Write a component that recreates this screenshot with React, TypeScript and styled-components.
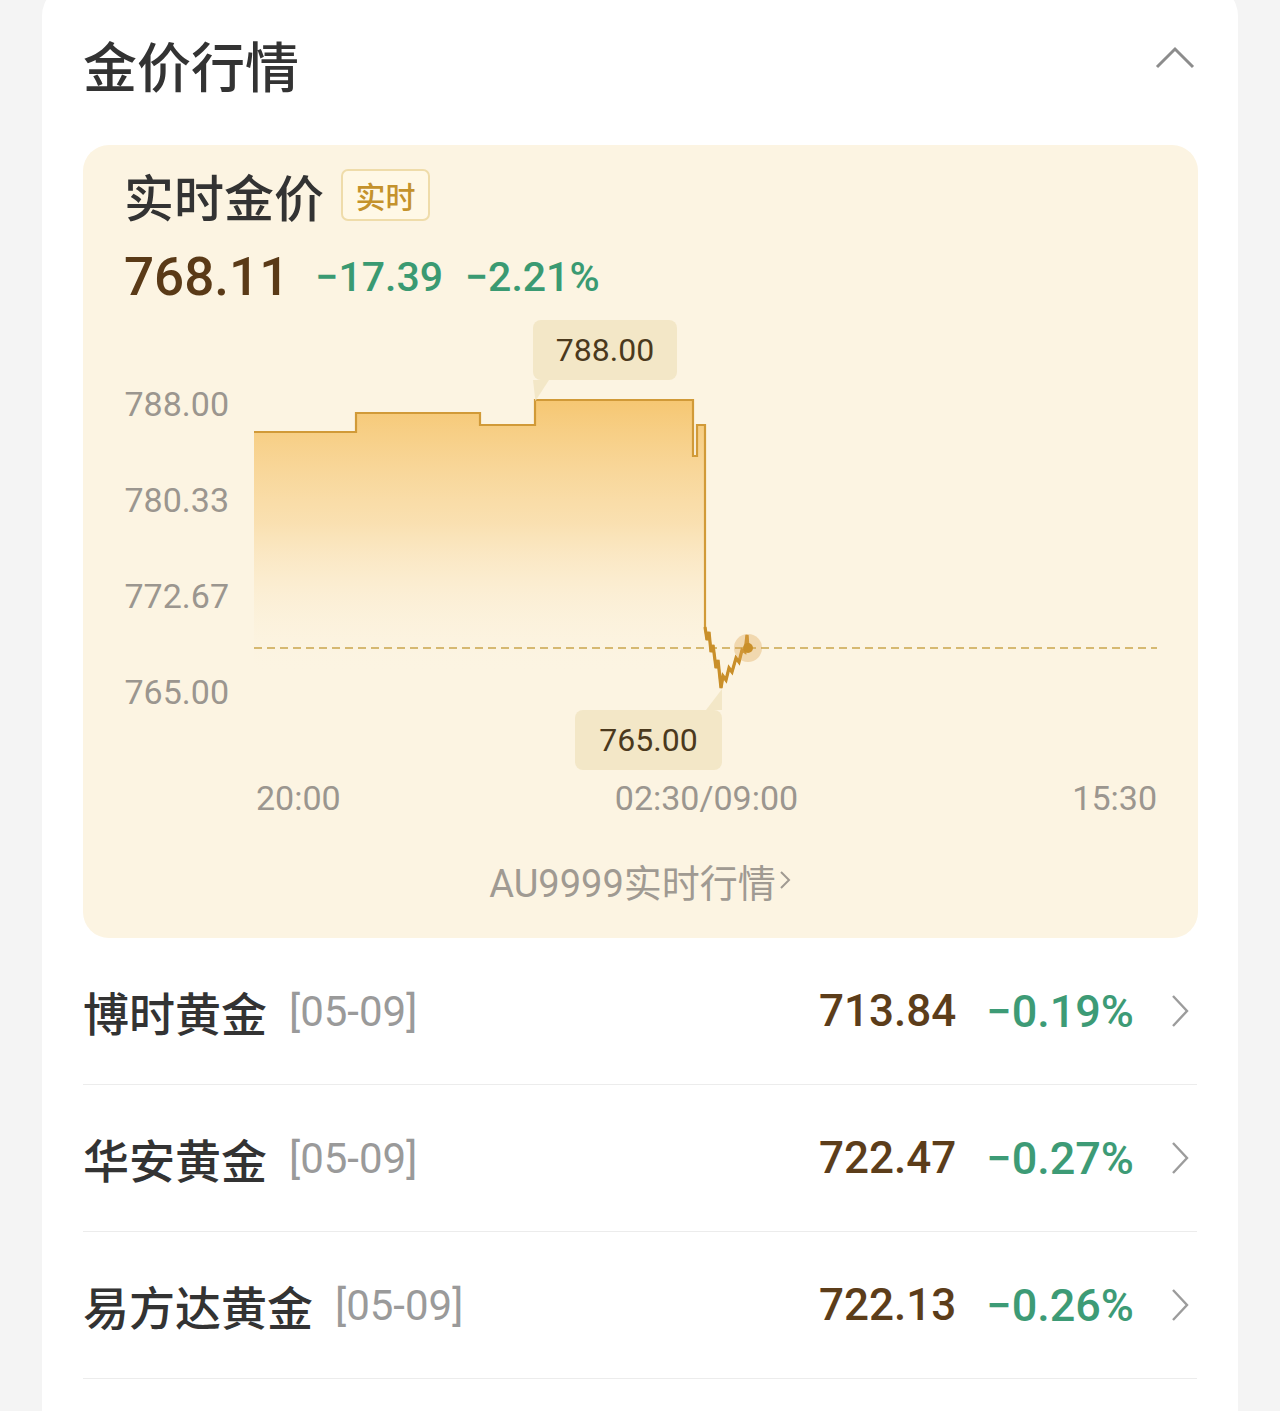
import styled, { createGlobalStyle } from "styled-components";

const GlobalStyle = createGlobalStyle`
  body {
    margin: 0;
    background: #f4f4f4;
    font-family: "Noto Sans CJK SC", "Noto Sans", sans-serif;
  }
`;

const NUM_FONT = `Roboto, "Noto Sans CJK SC", sans-serif`;

// chart geometry, in plot coordinates (origin at the plot's top-left)
const PLOT_W = 903;
const PLOT_H = 328;

const LINE: [number, number][] = [
  [0, 48], [102, 48], [102, 29], [226, 29], [226, 41], [281, 41], [281, 16],
  [439, 16], [439, 72], [443, 72], [443, 41], [451, 41], [451, 243],
  [453, 256], [455, 248], [457, 268], [459, 261], [462, 284], [464, 276],
  [467, 304], [469, 292], [472, 296], [475, 284], [478, 288], [482, 274],
  [485, 278], [488, 266], [491, 268], [493, 251], [494, 264],
];

const Y_LABELS = ["788.00", "780.33", "772.67", "765.00"];
const X_LABELS = ["20:00", "02:30/09:00", "15:30"];

const FUNDS = [
  { name: "博时黄金", date: "[05-09]", price: "713.84", change: "−0.19%" },
  { name: "华安黄金", date: "[05-09]", price: "722.47", change: "−0.27%" },
  { name: "易方达黄金", date: "[05-09]", price: "722.13", change: "−0.26%" },
];

export default function App() {
  const linePath = LINE.map(([x, y], i) => `${i ? "L" : "M"}${x},${y}`).join(" ");
  const wiggle = LINE.slice(12).map(([x, y], i) => `${i ? "L" : "M"}${x},${y}`).join(" ");
  const last = LINE[LINE.length - 1];
  const areaPath = `${linePath} L${last[0]},${PLOT_H} L0,${PLOT_H} Z`;

  return (
    <>
      <GlobalStyle />
      <Card>
        <Header>
          <Title>金价行情</Title>
          <CollapseIcon width="40" height="24" viewBox="0 0 40 24">
            <path d="M2 21 L20 3 L38 21" fill="none" stroke="#8c8c8c" strokeWidth="3" />
          </CollapseIcon>
        </Header>

        <GoldPanel>
          <PanelTitleRow>
            <PanelTitle>实时金价</PanelTitle>
            <LiveBadge>实时</LiveBadge>
          </PanelTitleRow>

          <PriceRow>
            <BigPrice>768.11</BigPrice>
            <Delta>−17.39</Delta>
            <Delta>−2.21%</Delta>
          </PriceRow>

          <ChartGrid>
            <YAxis>
              {Y_LABELS.map((l) => (
                <AxisLabel key={l}>{l}</AxisLabel>
              ))}
            </YAxis>
            <Plot>
              <svg width={PLOT_W} height={PLOT_H} style={{ overflow: "visible", display: "block" }}>
                <defs>
                  <linearGradient id="goldFill" x1="0" y1="16" x2="0" y2="290" gradientUnits="userSpaceOnUse">
                    <stop offset="0" stopColor="#f5c266" stopOpacity="0.9" />
                    <stop offset="0.45" stopColor="#f8d493" stopOpacity="0.62" />
                    <stop offset="1" stopColor="#fcf4e2" stopOpacity="0" />
                  </linearGradient>
                </defs>
                <path d={areaPath} fill="url(#goldFill)" />
                <line x1="0" y1="264" x2={PLOT_W} y2="264" stroke="#c9a54c" strokeWidth="1.6" strokeDasharray="8 5" />
                <path d={linePath} fill="none" stroke="#d19a38" strokeWidth="2.2" />
                <path d={wiggle} fill="none" stroke="#c98f2a" strokeWidth="3.2" />
                <circle cx="494" cy="264" r="14" fill="#dca24f" fillOpacity="0.35" />
                <circle cx="494" cy="264" r="5" fill="#c98f2a" />
              </svg>
              <Tip $x={279} $y={-64} $w={144} $tail="bottom">788.00</Tip>
              <Tip $x={321} $y={326} $w={147} $tail="top">765.00</Tip>
            </Plot>
          </ChartGrid>

          <XAxis>
            {X_LABELS.map((l) => (
              <AxisLabel key={l}>{l}</AxisLabel>
            ))}
          </XAxis>

          <MoreLink>
            AU9999实时行情
            <svg width="14" height="24" viewBox="0 0 14 24">
              <path d="M3 4 L11 12 L3 20" fill="none" stroke="#a09a92" strokeWidth="2" />
            </svg>
          </MoreLink>
        </GoldPanel>

        <FundList>
          {FUNDS.map((f) => (
            <FundRow key={f.name}>
              <FundName>{f.name}</FundName>
              <FundDate>{f.date}</FundDate>
              <FundRight>
                <FundPrice>{f.price}</FundPrice>
                <FundChange>{f.change}</FundChange>
                <svg width="20" height="34" viewBox="0 0 20 34">
                  <path d="M3 2 L17 17 L3 32" fill="none" stroke="#9c9c9c" strokeWidth="2.4" />
                </svg>
              </FundRight>
            </FundRow>
          ))}
        </FundList>
      </Card>
    </>
  );
}

// Styled Components

const Card = styled.div`
  width: 1196px;
  height: 1427px;
  margin: -16px 0 0 42px;
  padding: 16px 41px 0;
  box-sizing: border-box;
  background: #fff;
  border-radius: 32px 32px 0 0;
  overflow: hidden;
`;

const Header = styled.div`
  height: 130px;
  display: flex;
  align-items: center;
  justify-content: space-between;
  padding-right: 2px;
`;

const CollapseIcon = styled.svg`
  margin-bottom: 14px;
`;

const Title = styled.h1`
  margin: 0;
  font-size: 54px;
  font-weight: 500;
  color: #333;
  line-height: 1;
`;

const GoldPanel = styled.div`
  margin-top: 15px;
  margin-right: -1px;
  padding: 24px 41px 38px;
  background: #fcf4e2;
  border-radius: 26px;
`;

const PanelTitleRow = styled.div`
  display: flex;
  align-items: center;
  gap: 17px;
  height: 52px;
`;

const PanelTitle = styled.div`
  font-size: 50px;
  font-weight: 500;
  color: #333;
  line-height: 1;
`;

const LiveBadge = styled.span`
  display: inline-flex;
  align-items: center;
  justify-content: center;
  width: 89px;
  height: 52px;
  box-sizing: border-box;
  border: 2px solid #efdcaa;
  border-radius: 7px;
  background: #fff8e6;
  color: #c4922c;
  font-size: 30px;
  font-weight: 500;
`;

const PriceRow = styled.div`
  margin-top: 26px;
  height: 60px;
  display: flex;
  align-items: center;
  font-family: ${NUM_FONT};
`;

const BigPrice = styled.span`
  font-size: 53px;
  font-weight: 500;
  color: #5a3a17;
  margin-right: 26px;
`;

const Delta = styled.span`
  font-size: 41px;
  font-weight: 500;
  color: #3a9a72;
  margin-right: 22px;
`;

const ChartGrid = styled.div`
  margin-top: 77px;
  display: grid;
  grid-template-columns: 105px ${PLOT_W}px;
  column-gap: 25px;
  height: ${PLOT_H}px;
`;

const YAxis = styled.div`
  display: flex;
  flex-direction: column;
  justify-content: space-between;
  align-items: flex-end;
`;

const AxisLabel = styled.span`
  font-family: ${NUM_FONT};
  font-size: 34px;
  line-height: 40px;
  color: #9b968f;
`;

const Plot = styled.div`
  position: relative;
`;

const Tip = styled.div<{ $x: number; $y: number; $w: number; $tail: "top" | "bottom" }>`
  position: absolute;
  left: ${({ $x }) => $x}px;
  top: ${({ $y }) => $y}px;
  width: ${({ $w }) => $w}px;
  height: 60px;
  display: flex;
  align-items: center;
  justify-content: center;
  background: #f3e7c7;
  border-radius: 8px;
  font-family: ${NUM_FONT};
  font-size: 32px;
  color: #4b391d;

  &::after {
    content: "";
    position: absolute;
    width: 16px;
    height: 21px;
    background: #f3e7c7;
    ${({ $tail }) =>
      $tail === "bottom"
        ? `left: 0; top: 100%; clip-path: polygon(0 0, 100% 0, 15% 100%);`
        : `right: 0; bottom: 100%; clip-path: polygon(0 100%, 100% 100%, 100% 0);`}
  }
`;

const XAxis = styled.div`
  margin: 66px 0 0 132px;
  display: flex;
  justify-content: space-between;
`;

const MoreLink = styled.div`
  margin-top: 42px;
  height: 40px;
  display: flex;
  align-items: center;
  justify-content: center;
  gap: 2px;
  font-family: ${NUM_FONT};
  font-size: 38px;
  color: #a09a92;
`;

const FundList = styled.div``;

const FundRow = styled.div`
  height: 146px;
  display: flex;
  align-items: center;
  padding: 0 7px 0 0;
  border-bottom: 1px solid #ececec;
`;

const FundName = styled.span`
  font-size: 46px;
  font-weight: 500;
  color: #333;
`;

const FundDate = styled.span`
  margin-left: 22px;
  font-family: ${NUM_FONT};
  font-size: 42px;
  color: #9a9a9a;
`;

const FundRight = styled.div`
  margin-left: auto;
  display: flex;
  align-items: center;
`;

const FundPrice = styled.span`
  font-family: ${NUM_FONT};
  font-size: 44px;
  font-weight: 500;
  color: #5c3d1a;
  margin-right: 30px;
`;

const FundChange = styled.span`
  font-family: ${NUM_FONT};
  font-size: 45px;
  font-weight: 500;
  color: #3d9b76;
  margin-right: 36px;
`;
